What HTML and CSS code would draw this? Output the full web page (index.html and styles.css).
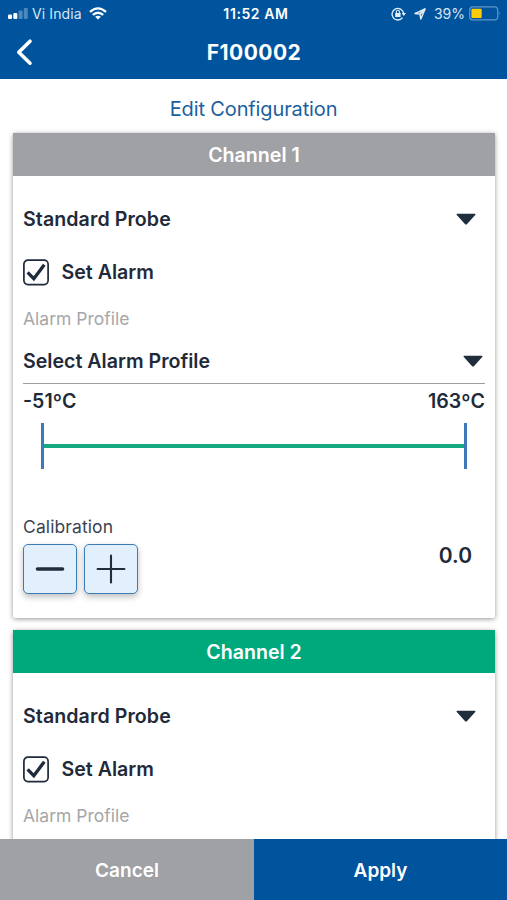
FILE: index.html
```html
<!DOCTYPE html>
<html lang="en">
<head>
<meta charset="utf-8">
<title>Edit Configuration</title>
<link rel="stylesheet" href="styles.css">
</head>
<body>
<div class="app">
  <header class="top">
    <div class="status">
      <div class="status-left">
        <svg class="signal" width="20" height="12" viewBox="0 0 20 12" fill="#fff"><rect x="0" y="6.6" width="4" height="4.4" rx="1"/><rect x="5.3" y="5" width="4" height="6" rx="1"/><rect x="10.6" y="2.5" width="4" height="8.5" rx="1" opacity=".3"/><rect x="15.8" y="0" width="4" height="11" rx="1" opacity=".3"/></svg>
        <span class="carrier">Vi India</span>
        <svg class="wifi" width="18" height="13" viewBox="0 0 18 13" fill="none" stroke="#fff" stroke-width="2.3"><path d="M1 4.9Q9-2.1 17 4.9"/><path d="M3.8 7.9Q9 3.5 14.2 7.9"/><path d="M9 12.6 6.1 9.8Q9 7.5 11.9 9.8Z" fill="#fff" stroke="none"/></svg>
      </div>
      <span class="clock">11:52 AM</span>
      <div class="status-right">
        <svg width="15" height="14" viewBox="0 0 15 14" fill="none" stroke="#e4eef7" stroke-width="1.3"><path d="M11.5 10.7A5.8 5.8 0 1 1 12.6 6.2"/><path d="M10.6 6H15L12.8 8.9Z" fill="#e4eef7" stroke="none"/><rect x="4.2" y="6" width="5.4" height="4" rx=".5" fill="#e4eef7" stroke="none"/><path d="M5.3 6.2V4.9a1.6 1.6 0 0 1 3.2 0v1.3" stroke-width="1.1"/></svg>
        <svg class="locate" width="12" height="12" viewBox="0 0 12 12" fill="none" stroke="#e4eef7" stroke-width="1.5" stroke-linejoin="round"><path d="M11 1 1 5.6 6 6 6.8 11Z"/><path d="M11 1 6 6" stroke-width="2"/></svg>
        <span class="percent">39%</span>
        <svg class="battery" width="32" height="15" viewBox="0 0 32 15"><rect x=".7" y=".9" width="28" height="13" rx="3.2" fill="none" stroke="#5f96c7" stroke-width="1.2"/><rect x="2.4" y="2.7" width="10.3" height="9.4" rx="1" fill="#ffcb05"/><path d="M30.2 5.2q1.8 2.2 0 4.4Z" fill="#5f96c7"/></svg>
      </div>
    </div>
    <div class="nav">
      <svg class="back" width="18" height="28" viewBox="0 0 18 28" fill="none" stroke="#fff" stroke-width="3.6" stroke-linecap="round" stroke-linejoin="round"><path d="M15 3.2 3.8 14.3 15 25.2"/></svg>
      <h1 class="device">F100002</h1>
      <span></span>
    </div>
  </header>

  <main class="content">
    <h2 class="page-title"><span>Edit Configuration</span></h2>

    <section class="card">
      <h3 class="card-head"><span class="head-text">Channel 1</span></h3>
      <div class="card-body">
        <div class="row probe"><span class="strong probe-name">Standard Probe</span><svg class="arrow" width="20" height="12" viewBox="0 0 20 12"><path d="M1 .7H19Q20 .9 19.2 1.9L11.1 10.9Q10 12 8.9 10.9L.8 1.9Q0 .9 1 .7Z" fill="#1f2d3d"/></svg></div>
        <div class="row alarm"><svg class="check" width="26" height="27" viewBox="0 0 26 27" fill="none" stroke="#1f2a3a"><rect x=".9" y="1.2" width="24.2" height="24.4" rx="4" stroke-width="1.7"/><path d="M5.8 14.6 10.8 19.7 20.3 7" stroke-width="3.3" stroke-linecap="square"/></svg><span class="strong alarm-text">Set Alarm</span></div>
        <div class="row label"><span class="label-text">Alarm Profile</span></div>
        <div class="row select"><span class="strong select-text">Select Alarm Profile</span><svg class="arrow" width="20" height="12" viewBox="0 0 20 12"><path d="M1 .7H19Q20 .9 19.2 1.9L11.1 10.9Q10 12 8.9 10.9L.8 1.9Q0 .9 1 .7Z" fill="#1f2d3d"/></svg></div>
        <div class="row range"><span class="strong low">-51ºC</span><span class="strong high">163ºC</span></div>
        <div class="slider"><span class="handle"></span><span class="track"></span><span class="handle"></span></div>
        <div class="row cal-label"><span class="cal-text">Calibration</span></div>
        <div class="calibration">
          <div class="steppers">
            <button class="step" aria-label="Decrease"><svg width="30" height="30" viewBox="0 0 30 30" stroke="#1f2d3d" stroke-linecap="round"><path d="M2.5 15H27.5" stroke-width="3.6"/></svg></button>
            <button class="step" aria-label="Increase"><svg width="30" height="30" viewBox="0 0 30 30" stroke="#1f2d3d" stroke-linecap="round"><path d="M1.6 15H28.4M15 1.6V28.4" stroke-width="2.1"/></svg></button>
          </div>
          <span class="value">0.0</span>
        </div>
      </div>
    </section>

    <section class="card">
      <h3 class="card-head active"><span class="head-text">Channel 2</span></h3>
      <div class="card-body">
        <div class="row probe"><span class="strong probe-name">Standard Probe</span><svg class="arrow" width="20" height="12" viewBox="0 0 20 12"><path d="M1 .7H19Q20 .9 19.2 1.9L11.1 10.9Q10 12 8.9 10.9L.8 1.9Q0 .9 1 .7Z" fill="#1f2d3d"/></svg></div>
        <div class="row alarm"><svg class="check" width="26" height="27" viewBox="0 0 26 27" fill="none" stroke="#1f2a3a"><rect x=".9" y="1.2" width="24.2" height="24.4" rx="4" stroke-width="1.7"/><path d="M5.8 14.6 10.8 19.7 20.3 7" stroke-width="3.3" stroke-linecap="square"/></svg><span class="strong alarm-text">Set Alarm</span></div>
        <div class="row label"><span class="label-text">Alarm Profile</span></div>
      </div>
    </section>
  </main>

  <footer class="actions">
    <button class="action cancel"><span>Cancel</span></button>
    <button class="action apply"><span>Apply</span></button>
  </footer>
</div>
</body>
</html>
```
FILE: styles.css
```css
* { box-sizing: border-box; }
body { margin: 0; font-family: Inter, "Liberation Sans", sans-serif; color: #1f2a3a; background: #fff; }
h1, h2, h3 { margin: 0; }
svg { display: block; flex: none; }
button { border: 0; padding: 0; font-family: inherit; }
span { white-space: nowrap; }

.app { height: 900px; display: flex; flex-direction: column; overflow: hidden; }
.top { flex: none; height: 79px; background: #00549e; color: #fff; }
.status { height: 27px; display: grid; grid-template-columns: 1fr auto 1fr; align-items: center; padding: 0 6px 0 8px; font-size: 14px; }
.status-left, .status-right { display: flex; align-items: center; }
.status-right { justify-content: flex-end; }
.carrier { margin-left: 4px; letter-spacing: .1px; color: #d5e5f3; }
.wifi { margin-left: 7px; }
.clock { margin-left: 3px; font-weight: 600; letter-spacing: .6px; }
.locate { margin-left: 8px; }
.percent { margin-left: 8px; color: #d5e5f3; }
.battery { margin-left: 4px; }
.nav { height: 51px; display: grid; grid-template-columns: 1fr auto 1fr; align-items: center; padding: 0 15px; }
.back { margin-top: -1px; }
.device { font-size: 21px; line-height: 26px; font-weight: 700; letter-spacing: .45px; padding-left: 1px; }

.content { flex: 1; min-height: 0; overflow: hidden; display: flex; flex-direction: column; }
.page-title { flex: none; height: 54px; padding-top: 6px; display: flex; align-items: center; justify-content: center; font-size: 20px; font-weight: 400; letter-spacing: -.13px; color: #1c5f9e; }
.card { flex: none; height: 485px; margin: 0 12px 12px 13px; background: #fff; border-radius: 2px; box-shadow: 0 1px 5px rgba(0, 0, 0, .42); }
.card-head { height: 43px; padding-top: 1px; display: flex; align-items: center; justify-content: center; background: #9fa1a4; color: #fff; font-size: 19.6px; font-weight: 600; }
.card-head.active { background: #00a97c; }
.card-body { padding: 18px 10px 0; }
.row { display: flex; align-items: center; justify-content: space-between; }
.strong { font-size: 19.6px; font-weight: 600; }
.probe { height: 50px; padding-right: 9px; }
.probe-name { letter-spacing: .08px; }
.alarm { height: 56px; justify-content: flex-start; gap: 12.5px; }
.label { height: 38px; padding-bottom: 2px; }
.label-text { font-size: 17.5px; color: #a6a6a8; }
.select { height: 46px; padding-right: 2px; border-bottom: 1px solid #a0a0a0; }
.range { height: 34px; padding-bottom: 1px; }
.slider { height: 56px; display: flex; align-items: center; padding: 0 18px; }
.handle { width: 3px; height: 46px; background: #3f78b8; }
.track { flex: 1; height: 4px; background: #14a982; }
.cal-label { height: 32px; margin-top: 36px; }
.cal-text { font-size: 17.5px; letter-spacing: .1px; color: #3b4451; }
.calibration { display: flex; justify-content: space-between; align-items: flex-start; padding: 2px 13px 0 0; }
.steppers { display: flex; gap: 7px; }
.step { width: 54px; height: 50px; display: flex; align-items: center; justify-content: center; background: #e2f0fd; border: 1.5px solid #3c7cb6; border-radius: 5px; box-shadow: 0 3px 6px rgba(0, 0, 0, .25); }
.value { font-size: 21px; line-height: 24px; font-weight: 600; }

.actions { flex: none; height: 61px; display: grid; grid-template-columns: 254px 1fr; }
.action { padding-top: 1px; color: #fff; font-size: 19px; font-weight: 600; }
.cancel { background: #9fa1a4; }
.apply { background: #00549e; }
```
